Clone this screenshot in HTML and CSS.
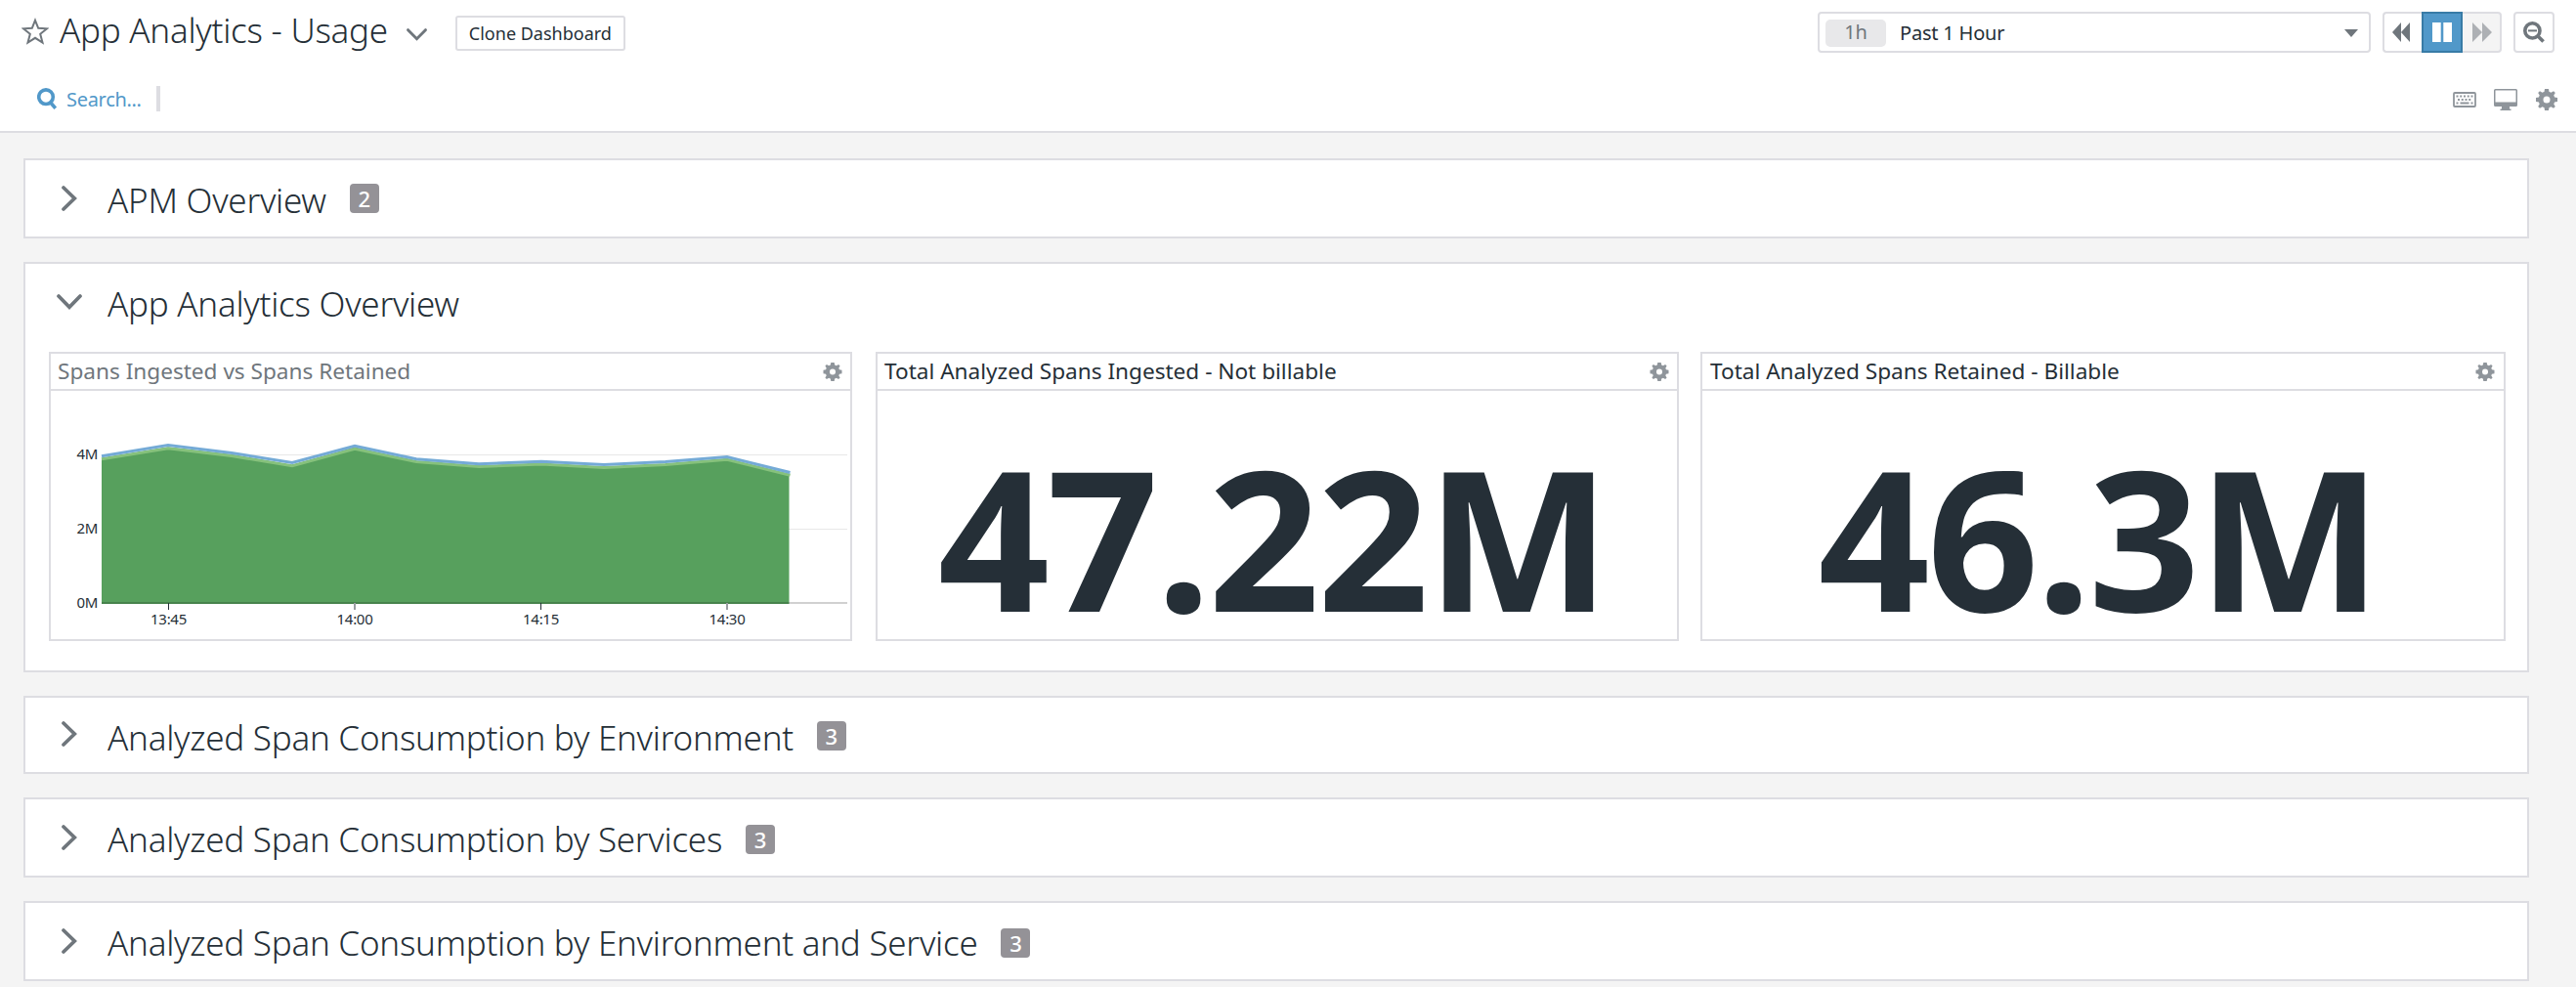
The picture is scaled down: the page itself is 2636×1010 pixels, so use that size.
FILE: index.html
```html
<!DOCTYPE html>
<html lang="en">
<head>
<meta charset="utf-8">
<title>App Analytics - Usage</title>
<link rel="stylesheet" href="styles.css">
</head>
<body>
<svg class="sprite" aria-hidden="true">
  <symbol id="gear" viewBox="-10 -10 20 20">
    <path fill-rule="evenodd" d="M-1.8-10h3.6l.5 2.7a7.3 7.3 0 0 1 1.7.7L6.4-8 8-6.4 6.6-4a7.3 7.3 0 0 1 .7 1.7l2.7.5v3.6l-2.7.5A7.3 7.3 0 0 1 6.600 4L8 6.400 6.400 8 4 6.600a7.300 7.300 0 0 1-1.700.7L1.800 10h-3.600l-.5-2.700A7.300 7.300 0 0 1-4 6.600L-6.400 8-8 6.400-6.600 4a7.300 7.300 0 0 1-.7-1.700L-10 1.800v-3.600l2.700-.5A7.300 7.300 0 0 1-6.600-4L-8-6.400-6.400-8-4-6.600a7.300 7.300 0 0 1 1.700-.7zM0-3.200a3.200 3.200 0 1 0 0 6.400a3.200 3.200 0 1 0 0-6.400z"/>
  </symbol>
  <symbol id="chevron-right" viewBox="0 0 16 26"><path d="M2 2 13.300 13 2 24"/></symbol>
  <symbol id="chevron-down" viewBox="0 0 26 16"><path d="M2 2 13 13.300 24 2"/></symbol>
</svg>

<header class="header">
  <div class="title-bar">
    <svg class="star" viewBox="0 0 28 28"><path d="M14 2.800 17.200 10.800 26 11.300 19.200 16.800 21.500 25.500 14 20.800 6.500 25.500 8.800 16.800 2 11.300 10.800 10.800z"/></svg>
    <h1 class="page-title">App Analytics - Usage</h1>
    <svg class="title-caret"><use href="#chevron-down"/></svg>
    <button class="clone">Clone Dashboard</button>
    <div class="time-picker">
      <span class="time-tag">1h</span>
      <span class="time-label">Past 1 Hour</span>
      <svg class="time-caret" viewBox="0 0 14 8"><path d="M0 0h14L7 8z"/></svg>
    </div>
    <div class="playback">
      <span class="play-btn"><svg viewBox="0 0 18 20"><path d="M9 0v20L0 10zM18 0v20L9 10z"/></svg></span>
      <span class="play-btn active"><svg viewBox="0 0 20 20"><path d="M0 0h8.700v20H0zM11.300 0H20v20h-8.700z"/></svg></span>
      <span class="play-btn disabled"><svg viewBox="0 0 20 20"><path d="M0 0l10 10L0 20zM10 0l10 10-10 10z"/></svg></span>
    </div>
    <span class="zoom-out"><svg viewBox="0 0 22 22"><circle cx="9.400" cy="9.400" r="7.600"/><path d="M14.800 14.800 20.600 20.600"/><path class="thin" d="M5 9.400h9"/></svg></span>
  </div>
  <div class="tool-bar">
    <svg class="search-icon" viewBox="0 0 20 22"><circle cx="9" cy="9.200" r="7.300"/><path d="M13.800 15 18.800 20.800"/></svg>
    <span class="search">Search...</span>
    <span class="divider"></span>
    <div class="tools">
      <svg class="keyboard" viewBox="0 0 24 16"><rect x="1" y="1" width="22" height="14" rx="1"/><path d="M3.500 4.500h17.500M5 8h15" stroke-dasharray="2 1.750"/><path d="M3.500 11.500h2M7.500 11.500h9M18.500 11.500h2"/></svg>
      <svg class="monitor" viewBox="0 0 24 22"><path fill-rule="evenodd" d="M1.500 0h21A1.500 1.500 0 0 1 24 1.500v15a1.500 1.500 0 0 1-1.500 1.500H16v2.500h1.500V22h-11v-1.500H8V18H1.500A1.500 1.500 0 0 1 0 16.500v-15A1.500 1.500 0 0 1 1.500 0zM1.500 1.500v12h21v-12z"/></svg>
      <svg class="gear-lg"><use href="#gear"/></svg>
    </div>
  </div>
</header>

<main class="board">
  <section class="group">
    <svg class="arrow"><use href="#chevron-right"/></svg>
    <h2>APM Overview</h2><span class="count">2</span>
  </section>

  <section class="group open">
    <div class="group-head">
      <svg class="arrow down"><use href="#chevron-down"/></svg>
      <h2>App Analytics Overview</h2>
    </div>
    <div class="widgets">
      <article class="widget series">
        <div class="widget-head"><h3>Spans Ingested vs Spans Retained</h3><svg class="gear-sm"><use href="#gear"/></svg></div>
        <svg class="chart" viewBox="0 0 818 254">
          <path class="grid" d="M52 65.500H815M52 141.500H815"/>
          <path class="area" d="M52 69 120 57.500 185 65 247 76 311 57.500 374 72 438 77.500 502 75.500 566 78.500 629 75.500 692 70 755.500 86V218H52z"/>
          <path class="retained" d="M52 69.800 120 58.800 185 66.500 247 76.800 311 59.200 374 72.500 438 77.600 502 75 566 78.500 629 75.500 692 70.300 756.500 86.300"/>
          <path class="ingested" d="M52 66.800 120 55.500 185 63.500 247 73.400 311 56.200 374 69.800 438 74.800 502 72.300 566 75.500 629 72.500 692 67.500 756.500 83.500"/>
          <path class="axis" d="M52 217H815"/>
          <path class="tick" d="M120.500 217v7M501.500 217v7"/>
          <path class="tick soft" d="M311 217v7M692 217v7"/>
          <g class="y-labels"><text x="48" y="70">4M</text><text x="48" y="146">2M</text><text x="48" y="222">0M</text></g>
          <g class="x-labels"><text x="120.500" y="239">13:45</text><text x="311" y="239">14:00</text><text x="501.500" y="239">14:15</text><text x="692" y="239">14:30</text></g>
        </svg>
      </article>
      <article class="widget">
        <div class="widget-head"><h3>Total Analyzed Spans Ingested - Not billable</h3><svg class="gear-sm"><use href="#gear"/></svg></div>
        <div class="value">47.22M</div>
      </article>
      <article class="widget">
        <div class="widget-head"><h3>Total Analyzed Spans Retained - Billable</h3><svg class="gear-sm"><use href="#gear"/></svg></div>
        <div class="value">46.3M</div>
      </article>
    </div>
  </section>

  <section class="group compact">
    <svg class="arrow"><use href="#chevron-right"/></svg>
    <h2>Analyzed Span Consumption by Environment</h2><span class="count">3</span>
  </section>
  <section class="group low">
    <svg class="arrow"><use href="#chevron-right"/></svg>
    <h2>Analyzed Span Consumption by Services</h2><span class="count">3</span>
  </section>
  <section class="group low">
    <svg class="arrow"><use href="#chevron-right"/></svg>
    <h2>Analyzed Span Consumption by Environment and Service</h2><span class="count">3</span>
  </section>
</main>
</body>
</html>
```

FILE: styles.css
```css
* { box-sizing: border-box; }
body {
  margin: 0;
  height: 1010px;
  overflow: hidden;
  background: #f4f4f4;
  color: #252f37;
  font-family: "Noto Sans", sans-serif;
}
h1, h2, h3 { margin: 0; font-weight: 300; white-space: nowrap; }
svg { display: block; flex: none; }
.sprite { position: absolute; width: 0; height: 0; }

.header {
  height: 136px;
  background: #fff;
  border-bottom: 2px solid #dddde2;
}
.title-bar { display: flex; align-items: center; height: 66px; padding: 0 22px; }
.star { width: 28px; height: 28px; margin-top: -3px; fill: none; stroke: #6f767c; stroke-width: 2; }
.page-title { margin: -4px 0 0 11px; font-size: 35px; line-height: 48px; letter-spacing: -.25px; }
.title-caret { width: 21px; height: 13px; margin: 4px 0 0 19px; fill: none; stroke: #6f767c; stroke-width: 3.600; stroke-linecap: round; }
.clone {
  height: 36px;
  width: 174px;
  margin: 2px 0 0 29px;
  padding: 0;
  border: 2px solid #dddde2;
  border-radius: 3px;
  background: #fff;
  color: inherit;
  font: 18px/30px "Noto Sans", sans-serif;
  white-space: nowrap;
}
.time-picker {
  display: flex;
  align-items: center;
  width: 566px;
  height: 42px;
  margin-left: auto;
  padding: 0 11px 0 6px;
  border: 2px solid #dddde2;
  border-radius: 4px;
  font-size: 20px;
  letter-spacing: -.2px;
}
.time-tag {
  width: 62px;
  height: 28px;
  margin-top: 2px;
  border-radius: 5px;
  background: #e8e8ea;
  color: #6f767c;
  line-height: 26px;
  text-align: center;
}
.time-label { margin-left: 14px; }
.time-caret { width: 14px; height: 8px; margin: 2px 0 0 auto; fill: #6f767c; }
.playback { display: flex; margin-left: 12px; }
.play-btn, .zoom-out {
  display: flex;
  align-items: center;
  justify-content: center;
  width: 40px;
  height: 42px;
  border: 2px solid #dddde2;
  fill: #6f767c;
}
.play-btn svg { width: 20px; height: 20px; }
.play-btn:first-child { padding-right: 4px; border-right: 0; border-radius: 4px 0 0 4px; }
.play-btn:first-child svg { width: 18px; }
.play-btn.active { width: 42px; border-color: #387ba6; background: #5198c9; fill: #fff; }
.play-btn.disabled { padding-left: 2px; border-left: 0; border-radius: 0 4px 4px 0; background: #f4f4f4; fill: #adb0b4; }
.zoom-out { width: 42px; margin-left: 12px; border-radius: 4px; fill: none; stroke: #6f767c; stroke-width: 3.600; }
.zoom-out svg { width: 22px; height: 22px; }
.zoom-out .thin { stroke-width: 2; }

.tool-bar { display: flex; align-items: center; height: 68px; padding: 2px 19px 0 38px; }
.search-icon { width: 20px; height: 22px; fill: none; stroke: #5198c9; stroke-width: 3.600; }
.search { margin-left: 10px; color: #5198c9; font-size: 20px; letter-spacing: -.3px; }
.divider { width: 4px; height: 26px; margin-left: 15px; background: #dddde2; }
.tools { display: flex; align-items: center; gap: 18px; margin: 2px 0 0 auto; fill: #8f959b; }
.keyboard { width: 24px; height: 16px; fill: none; stroke: #8f959b; stroke-width: 1.800; }
.monitor { width: 24px; height: 22px; }
.gear-lg { width: 22px; height: 22px; margin-left: 1px; }

.board { display: flex; flex-direction: column; gap: 24px; padding: 26px 48px 0 24px; }
.group {
  display: flex;
  align-items: flex-start;
  height: 82px;
  padding-left: 37px;
  border: 2px solid #dddde2;
  background: #fff;
}
.group h2 { margin-top: 17px; font-size: 35px; line-height: 48px; letter-spacing: -.25px; }
.arrow { width: 16px; height: 26px; margin: 26px 31px 0 0; fill: none; stroke: #6f767c; stroke-width: 3.700; stroke-linecap: round; }
.arrow.down { width: 26px; height: 16px; margin: 31px 26px 0 0; }
.count {
  width: 30px;
  height: 30px;
  margin: 24px 0 0 24px;
  border-radius: 4px;
  background: #949297;
  color: #fff;
  font-size: 22px;
  font-weight: 500;
  line-height: 31px;
  text-align: center;
}
.compact { height: 80px; }
.compact .arrow { margin-top: 24px; }
.low .count { margin-top: 26px; }
.group.open { display: block; height: 420px; padding: 0; }
.group-head { display: flex; align-items: flex-start; height: 84px; padding-left: 32px; }
.widgets { display: grid; grid-template-columns: 824px 822px 824px; column-gap: 22px; padding: 6px 0 0 24px; }
.widget { height: 296px; border: 2px solid #dddde2; }
.widget.series { width: 822px; }
.widget-head {
  display: flex;
  align-items: center;
  justify-content: space-between;
  height: 38px;
  padding: 0 8px 0 7px;
  border-bottom: 2px solid #dddde2;
}
.widget:last-child .widget-head { padding: 0 9px 0 8px; }
.widget-head h3 { margin-top: -1px; font-size: 22.600px; font-weight: 400; line-height: 30px; }
.series h3 { color: #6f767c; }
.gear-sm { width: 20px; height: 19px; fill: #8f959b; }
.value { padding: 22px 9px 0 0; font-size: 200px; font-weight: 700; line-height: 254px; letter-spacing: -2.800px; text-align: center; }

.chart { width: 818px; height: 254px; font-size: 15px; letter-spacing: -.3px; fill: #252f37; }
.grid { stroke: #e8e8e8; }
.area { fill: #57a05d; }
.retained, .ingested { fill: none; stroke-width: 3; }
.retained { stroke: #86c17c; }
.ingested { stroke: #74aad6; }
.axis { stroke: #000; stroke-opacity: .18; stroke-width: 2; }
.tick { stroke: #252f37; }
.tick.soft { stroke: #9a9ea2; stroke-width: 2; }
.y-labels { text-anchor: end; }
.x-labels { text-anchor: middle; }
```
